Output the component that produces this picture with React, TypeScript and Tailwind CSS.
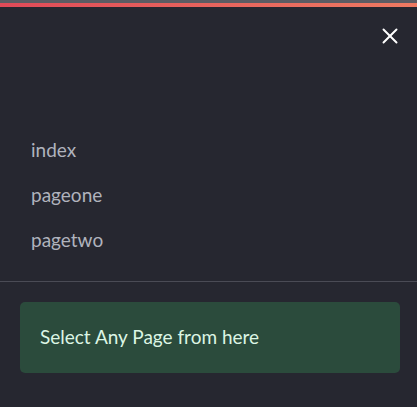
import { X } from "lucide-react";

const PAGES = ["index", "pageone", "pagetwo"];

export default function App() {
  return (
    <div className="h-[407px] w-[417px] overflow-hidden bg-[#262730]" style={{ fontFamily: "Lato, 'Noto Sans', sans-serif" }}>
      <div className="h-[3px] bg-[#5c5c63]" />
      <div className="h-[4px] bg-gradient-to-r from-[#e04a58] to-[#ee7a62]" />

      <div className="flex justify-end pr-[14px] pt-[16px]">
        <X size={26} strokeWidth={1.8} className="text-white" />
      </div>

      {/* page links */}
      <nav className="mt-[89px] flex flex-col gap-[22px] pl-[31px]">
        {PAGES.map((p) => (
          <a key={p} className="text-[19px] leading-[23px] text-[#b0b3bd]">{p}</a>
        ))}
      </nav>

      <div className="mt-[30px] h-px bg-[#4a4b55]" />

      <div className="ml-[20px] mt-[20px] flex h-[71px] w-[380px] items-center rounded-[5px] bg-[#2b4b3c] px-[20px]">
        <p className="text-[19px] text-[#dcf5e4]">Select Any Page from here</p>
      </div>
    </div>
  );
}
